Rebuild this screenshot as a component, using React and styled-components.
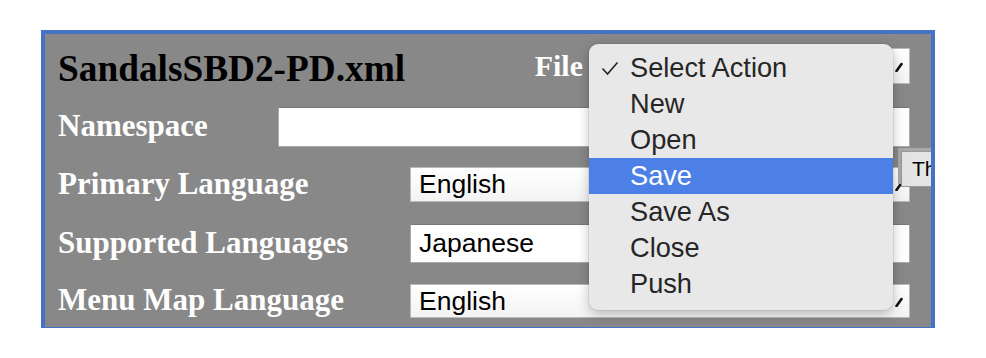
import React from 'react';
import styled, { createGlobalStyle } from 'styled-components';

const GlobalStyle = createGlobalStyle`
  body {
    margin: 0;
    background: #ffffff;
  }
`;

const Page = styled.div`
  width: 986px;
  height: 358px;
  padding: 30px 0 0 41px;
  box-sizing: border-box;
`;

const Panel = styled.div`
  position: relative;
  width: 894px;
  box-sizing: border-box;
  border: 4px solid #4472c4;
  border-bottom-width: 1px;
  background: #888888;
  padding: 14px 21px 9px 13px;
  display: flex;
  flex-direction: column;
  overflow: hidden;
`;

const Row = styled.div`
  display: flex;
  align-items: center;
  height: ${p => p.$height}px;
  margin-top: ${p => p.$space || 0}px;
`;

const TitleRow = styled(Row)`
  justify-content: space-between;
`;

const Title = styled.h2`
  margin: 0;
  padding-top: 5px;
  font-family: 'Liberation Serif', 'Times New Roman', serif;
  font-weight: bold;
  font-size: 37.3px;
  line-height: 1;
  color: #000;
`;

const FileGroup = styled.div`
  display: flex;
  align-items: center;
  height: 100%;
`;

const Label = styled.label`
  flex: 0 0 ${p => p.$width}px;
  padding-bottom: 3px;
  font-family: 'Liberation Serif', 'Times New Roman', serif;
  font-weight: bold;
  font-size: 31px;
  line-height: 1;
  color: #fff;
`;

const FileLabel = styled(Label)`
  flex: none;
  font-size: 30px;
  margin-right: 8px;
  padding-bottom: 0;
`;

const SelectBox = styled.div`
  position: relative;
  box-sizing: border-box;
  width: ${p => p.$width}px;
  height: 100%;
  background: linear-gradient(#ffffff, #f3f3f3);
  border: 1px solid #b9b9b9;
  display: flex;
  align-items: center;
  padding-left: 8px;
  font-family: 'Liberation Sans', Arial, sans-serif;
  font-size: 26.5px;
  color: #000;
`;

const Arrow = styled.svg`
  position: absolute;
  right: 6px;
  top: 50%;
  margin-top: -4px;
`;

const TextBox = styled.div`
  box-sizing: border-box;
  width: ${p => p.$width}px;
  height: 100%;
  background: #fff;
  border: 1px solid #a9a9a9;
  border-top-color: #777;
  display: flex;
  align-items: center;
  padding-left: 8px;
  font-family: 'Liberation Sans', Arial, sans-serif;
  font-size: 26.5px;
  color: #000;
`;

const Menu = styled.ul`
  position: absolute;
  left: -3px;
  top: -5px;
  width: 304px;
  margin: 0;
  padding: 6px 0 8px;
  list-style: none;
  box-sizing: border-box;
  background: #e8e8e8;
  border-radius: 9px;
  box-shadow: 0 4px 12px rgba(0, 0, 0, 0.25), 0 0 0 1px rgba(0, 0, 0, 0.06);
  z-index: 5;
`;

const MenuItem = styled.li`
  position: relative;
  height: 36px;
  display: flex;
  align-items: center;
  padding-left: 41px;
  font-family: 'Liberation Sans', Arial, sans-serif;
  font-size: 27.2px;
  color: ${p => (p.$active ? '#ffffff' : '#262626')};
  background: ${p => (p.$active ? '#4d80e6' : 'transparent')};
`;

const Check = styled.svg`
  position: absolute;
  left: 12px;
  top: 11px;
`;

const Tooltip = styled.div`
  position: absolute;
  left: 490px;
  top: -17px;
  height: 36px;
  box-sizing: border-box;
  padding: 0 10px;
  display: flex;
  align-items: center;
  background: #e4e4e4;
  border: 1px solid #9a9a9a;
  box-shadow: -3px -3px 0 #a8a8a8;
  font-family: 'Liberation Sans', Arial, sans-serif;
  font-size: 21px;
  color: #000;
  white-space: nowrap;
  z-index: 4;
`;

const actions = ['Select Action', 'New', 'Open', 'Save', 'Save As', 'Close', 'Push'];

const SelectArrow = () => (
  <Arrow width="8" height="10" viewBox="0 0 8 10">
    <path d="M1.5 9 L6.5 2" stroke="#111" strokeWidth="2.6" strokeLinecap="round" />
  </Arrow>
);

const App = () => (
  <Page>
    <GlobalStyle />
    <Panel>
      <TitleRow $height={36}>
        <Title>SandalsSBD2-PD.xml</Title>
        <FileGroup>
          <FileLabel>File</FileLabel>
          <SelectBox $width={319}>
            <SelectArrow />
            <Menu>
              {actions.map((a, i) => (
                <MenuItem key={a} $active={a === 'Save'}>
                  {i === 0 && (
                    <Check width="18" height="15" viewBox="0 0 18 15">
                      <path d="M1.5 7.5 L6.5 13 L16.5 1.5" fill="none" stroke="#262626" strokeWidth="1.6" />
                    </Check>
                  )}
                  {a}
                </MenuItem>
              ))}
            </Menu>
          </SelectBox>
        </FileGroup>
      </TitleRow>
      <Row $height={40} $space={23}>
        <Label $width={220}>Namespace</Label>
        <TextBox $width={632} />
      </Row>
      <Row $height={35} $space={20}>
        <Label $width={352}>Primary Language</Label>
        <SelectBox $width={500}>
          English
          <SelectArrow />
          <Tooltip>Th</Tooltip>
        </SelectBox>
      </Row>
      <Row $height={39} $space={22}>
        <Label $width={352}>Supported Languages</Label>
        <TextBox $width={500}>Japanese</TextBox>
      </Row>
      <Row $height={34} $space={21}>
        <Label $width={352}>Menu Map Language</Label>
        <SelectBox $width={500}>
          English
          <SelectArrow />
        </SelectBox>
      </Row>
    </Panel>
  </Page>
);

export default App;
